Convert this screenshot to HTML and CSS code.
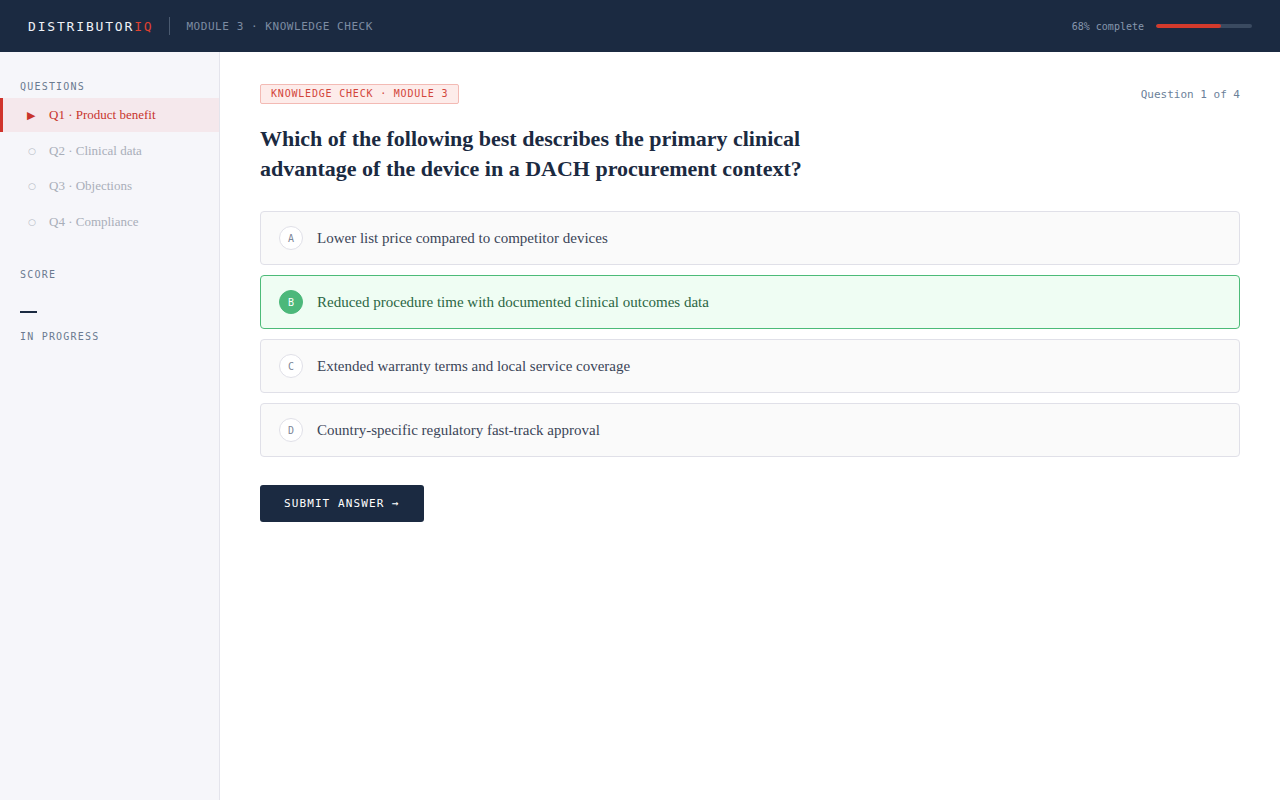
FILE: index.html
```html
<!DOCTYPE html>
<html>
<head>
<meta charset="utf-8">
<link rel="stylesheet" href="styles.css">
</head>
<body>
<header class="topbar">
  <div class="brand">DISTRIBUTOR<span class="brand-accent">IQ</span></div>
  <div class="divider"></div>
  <div class="crumb">MODULE 3 · KNOWLEDGE CHECK</div>
  <div class="progress">
    <span class="progress-label">68% complete</span>
    <div class="progress-track"><div class="progress-fill" style="width:68%"></div></div>
  </div>
</header>
<div class="layout">
  <aside class="sidebar">
    <div class="side-label">QUESTIONS</div>
    <ul class="qlist">
      <li class="qitem active"><span class="qicon">▶</span><span>Q1 · Product benefit</span></li>
      <li class="qitem"><span class="qicon">○</span><span>Q2 · Clinical data</span></li>
      <li class="qitem"><span class="qicon">○</span><span>Q3 · Objections</span></li>
      <li class="qitem"><span class="qicon">○</span><span>Q4 · Compliance</span></li>
    </ul>
    <div class="side-label score-label">SCORE</div>
    <div class="score-dash"></div>
    <div class="side-label status">IN PROGRESS</div>
  </aside>
  <main class="main">
    <div class="main-top">
      <span class="badge">KNOWLEDGE CHECK · MODULE 3</span>
      <span class="counter">Question 1 of 4</span>
    </div>
    <h1 class="question">Which of the following best describes the primary clinical advantage of the device in a DACH procurement context?</h1>
    <div class="options">
      <div class="option"><span class="letter">A</span><span class="opt-text">Lower list price compared to competitor devices</span></div>
      <div class="option selected"><span class="letter">B</span><span class="opt-text">Reduced procedure time with documented clinical outcomes data</span></div>
      <div class="option"><span class="letter">C</span><span class="opt-text">Extended warranty terms and local service coverage</span></div>
      <div class="option"><span class="letter">D</span><span class="opt-text">Country-specific regulatory fast-track approval</span></div>
    </div>
    <button class="submit">SUBMIT ANSWER →</button>
  </main>
</div>
</body>
</html>
```

FILE: styles.css
```css
* { box-sizing: border-box; }
html, body { margin: 0; padding: 0; }
body {
  font-family: "Liberation Serif", serif;
  background: #ffffff;
  color: #1b2a41;
  height: 800px;
  overflow: hidden;
}
.topbar {
  height: 52px;
  background: #1b2a41;
  display: flex;
  align-items: center;
  padding: 0 28px;
  font-family: "DejaVu Sans Mono", monospace;
}
.brand {
  font-size: 13px;
  letter-spacing: 0.14em;
  color: #eef1f6;
  font-weight: 500;
}
.brand-accent { color: #e0412f; }
.divider {
  width: 1px;
  height: 18px;
  background: #4a5a70;
  margin: 0 16px 0 16px;
}
.crumb {
  font-size: 11px;
  letter-spacing: 0.05em;
  color: #7d8ca2;
}
.progress {
  margin-left: auto;
  display: flex;
  align-items: center;
  gap: 12px;
}
.progress-label {
  font-size: 10px;
  color: #8797ad;
}
.progress-track {
  width: 96px;
  height: 4px;
  border-radius: 2px;
  background: #3a4a60;
  overflow: hidden;
}
.progress-fill {
  height: 100%;
  background: #d33a2c;
  border-radius: 2px;
}
.layout {
  display: flex;
  height: 748px;
}
.sidebar {
  width: 220px;
  flex-shrink: 0;
  background: #f6f6fa;
  border-right: 1px solid #e4e4ec;
  padding-top: 29px;
}
.side-label {
  font-family: "DejaVu Sans Mono", monospace;
  font-size: 10px;
  letter-spacing: 0.12em;
  color: #6b7a90;
  padding-left: 20px;
  line-height: 12px;
}
.qlist {
  list-style: none;
  margin: 5px 0 0;
  padding: 0;
}
.qitem {
  height: 35.5px;
  display: flex;
  align-items: center;
  padding-left: 24px;
  font-size: 13px;
  color: #a9aeb9;
  border-left: 3px solid transparent;
}
.qitem .qicon {
  width: 22px;
  font-size: 9px;
  padding-left: 1px;
  color: #b5bac4;
  font-family: "DejaVu Sans", sans-serif;
}
.qitem.active {
  background: #f5e8ec;
  border-left-color: #d0342c;
  color: #c8342c;
  height: 34px;
  margin-bottom: 1px;
}
.qitem.active .qicon {
  color: #c8342c;
  font-size: 11px;
  padding-left: 0;
}
.score-label { margin-top: 29px; }
.score-dash {
  width: 17px;
  height: 2px;
  background: #1b2a41;
  margin: 30px 0 0 20px;
}
.status { margin-top: 18px; }
.main {
  flex: 1;
  padding: 32px 40px 0;
}
.main-top {
  display: flex;
  justify-content: space-between;
  align-items: center;
}
.badge {
  font-family: "DejaVu Sans Mono", monospace;
  font-size: 10px;
  letter-spacing: 0.08em;
  color: #d2453a;
  background: #fdecea;
  border: 1px solid #f3bab4;
  border-radius: 2px;
  padding: 3px 10px;
  line-height: 12px;
}
.counter {
  font-family: "DejaVu Sans Mono", monospace;
  font-size: 11px;
  color: #6b7f99;
}
.question {
  font-size: 22px;
  line-height: 30px;
  font-weight: bold;
  color: #1b2a41;
  max-width: 580px;
  margin: 20px 0 27px;
}
.options {
  display: flex;
  flex-direction: column;
  gap: 10px;
}
.option {
  height: 54px;
  display: flex;
  align-items: center;
  padding: 0 18px;
  background: #fafafa;
  border: 1px solid #e0e0e8;
  border-radius: 4px;
  font-size: 15px;
  color: #3a4558;
}
.letter {
  width: 24px;
  height: 24px;
  border-radius: 50%;
  border: 1px solid #e0e0e8;
  background: #ffffff;
  display: flex;
  align-items: center;
  justify-content: center;
  font-family: "DejaVu Sans Mono", monospace;
  font-size: 10px;
  color: #7d8799;
  margin-right: 14px;
  flex-shrink: 0;
}
.option.selected {
  background: #effdf3;
  border-color: #4cbb78;
  color: #2b6644;
}
.option.selected .letter {
  background: #4cb87a;
  border-color: #4cb87a;
  color: #ffffff;
}
.submit {
  margin-top: 28px;
  height: 37px;
  padding: 0 24px;
  background: #1b2a41;
  color: #ffffff;
  border: none;
  border-radius: 3px;
  font-family: "DejaVu Sans Mono", monospace;
  font-size: 11px;
  letter-spacing: 0.1em;
  font-weight: 500;
}
```
